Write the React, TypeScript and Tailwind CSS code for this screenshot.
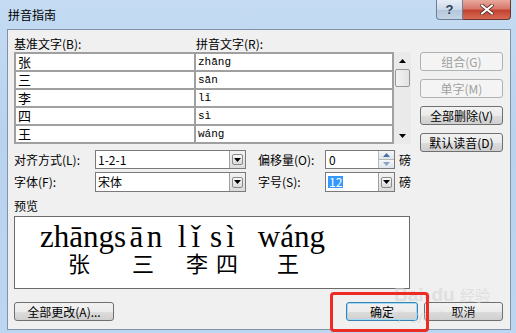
import React from "react";

const CJK = { fontFamily: '"Noto Sans CJK SC", "Liberation Sans", sans-serif' };

function Btn({ children, w, disabled, def }: { children: React.ReactNode; w: string; disabled?: boolean; def?: boolean }) {
  const base = "flex items-center justify-center h-[19px] rounded-[3px] text-[12px] leading-none";
  if (disabled)
    return (
      <div className={`${base} ${w} border border-[#adb2b5] bg-[#f4f4f4] text-[#a0a0a0]`}>{children}</div>
    );
  return (
    <div
      className={`${base} ${w} border ${def ? "border-[#3c7fb1] shadow-[inset_0_0_0_1px_#9ddcf6]" : "border-[#707070]"} bg-[linear-gradient(#f2f2f2_0%,#ebebeb_50%,#dddddd_51%,#cfcfcf_100%)] text-black`}
    >
      {children}
    </div>
  );
}

function DropBtn() {
  return (
    <div className="w-[16px] h-full border-l border-[#a0a0a0] bg-[linear-gradient(#f2f2f2,#dcdcdc)] flex items-center justify-center">
      <div className="w-[11px] h-[11px] border border-[#8a8a8a] rounded-[2px] bg-[linear-gradient(#fafafa,#d9d9d9)] flex items-center justify-center">
        <svg width="7" height="4" viewBox="0 0 7 4"><path d="M0 0h7L3.5 4z" fill="#000" /></svg>
      </div>
    </div>
  );
}

function Combo({ value, w, sel }: { value: string; w: string; sel?: boolean }) {
  return (
    <div className={`${w} h-full border border-[#7a7a7a] bg-white flex items-center`}>
      <div className="flex-1 pl-[2px] text-[12px] leading-none flex items-center">
        {sel ? <span className="bg-[#3399ff] text-white px-[1px]">{value}</span> : <span>{value}</span>}
      </div>
      <DropBtn />
    </div>
  );
}

function Spin({ value, w }: { value: string; w: string }) {
  return (
    <div className={`${w} h-full border border-[#7a7a7a] bg-white flex items-center`}>
      <div className="flex-1 pl-[3px] text-[12px] leading-none">{value}</div>
      <div className="w-[16px] h-full flex flex-col border-l border-[#b8b8b8]">
        <div className="flex-1 bg-[linear-gradient(#f6f6f6,#dfe6ee)] border-b border-[#b8b8b8] flex items-center justify-center">
          <svg width="7" height="4" viewBox="0 0 7 4"><path d="M0 4h7L3.5 0z" fill="#4a6fa5" /></svg>
        </div>
        <div className="flex-1 bg-[linear-gradient(#f6f6f6,#dfe6ee)] flex items-center justify-center">
          <svg width="7" height="4" viewBox="0 0 7 4"><path d="M0 0h7L3.5 4z" fill="#8aa0c0" /></svg>
        </div>
      </div>
    </div>
  );
}

const rows: [string, string][] = [
  ["张", "zhāng"],
  ["三", "sān"],
  ["李", "lǐ"],
  ["四", "sì"],
  ["王", "wáng"],
];

export default function App() {
  return (
    <div
      className="relative w-[516px] h-[333px] overflow-hidden bg-[linear-gradient(180deg,#c4dbf3_0%,#b9d2ee_40%,#bcd5f0_100%)]"
      style={CJK}
    >
      {/* title bar */}
      <div className="h-[29px] flex items-start">
        <div className="pl-[8px] pt-[7px] text-[12px] leading-[16px] text-black">拼音指南</div>
        <div className="flex-1" />
        <div className="flex mr-[5px]">
          <div className="w-[27px] h-[20px] border border-[#6d7f98] border-t-0 rounded-bl-[4px] bg-[linear-gradient(#e6edf6_0%,#cbd8e7_50%,#b4c6db_51%,#c5d5e7_100%)] flex items-center justify-center">
            <span className="text-[13px] font-bold leading-none text-[#2c3e57]" style={{ fontFamily: '"Liberation Sans", sans-serif' }}>?</span>
          </div>
          <div className="w-[48px] h-[20px] border border-[#6d3530] border-t-0 border-l-0 rounded-br-[4px] bg-[linear-gradient(#e9a99d_0%,#d7786b_45%,#c2432f_55%,#d86a55_100%)] flex items-center justify-center">
            <svg width="14" height="11" viewBox="0 0 14 11">
              <path d="M2 1.5l10 8M12 1.5l-10 8" stroke="#5a2a24" strokeWidth="3.6" strokeLinecap="round" />
              <path d="M2 1.5l10 8M12 1.5l-10 8" stroke="#fff" strokeWidth="2.2" strokeLinecap="round" />
            </svg>
          </div>
        </div>
      </div>

      {/* content */}
      <div className="ml-[7px] mr-[5px] h-[301px] border border-[#8193a8] bg-[#f0f0f0] pl-[6px] pt-[6px] text-[12px] text-black">
        <div className="flex">
          {/* left part */}
          <div className="w-[397px] flex flex-col">
            <div className="flex h-[16px] items-center leading-none">
              <div className="w-[182px]">基准文字(B):</div>
              <div>拼音文字(R):</div>
            </div>
            <div className="flex h-[92px]">
              <div className="w-[380px] h-full bg-[#a0a0a0] p-[2px] grid grid-cols-[178px_196px] auto-rows-[16px] gap-[2px]">
                {rows.map(([c, p]) => (
                  <React.Fragment key={c}>
                    <div className="bg-white pl-[2px] text-[13px] leading-[16px]">{c}</div>
                    <div className="bg-white pl-[2px] text-[11px] leading-[16px]" style={{ fontFamily: '"Liberation Mono", monospace' }}>{p}</div>
                  </React.Fragment>
                ))}
              </div>
              <div className="w-[17px] h-full bg-[#eaeaea] flex flex-col">
                <div className="h-[17px] flex items-center justify-center">
                  <svg width="7" height="4" viewBox="0 0 7 4"><path d="M0 4h7L3.5 0z" fill="#000" /></svg>
                </div>
                <div className="mx-[1px] h-[18px] border border-[#979797] rounded-[2px] bg-[linear-gradient(90deg,#f3f3f3,#e2e2e2)]" />
                <div className="flex-1" />
                <div className="h-[17px] flex items-center justify-center">
                  <svg width="7" height="4" viewBox="0 0 7 4"><path d="M0 0h7L3.5 4z" fill="#000" /></svg>
                </div>
              </div>
            </div>

            <div className="flex items-center h-[19px] mt-[6px]">
              <div className="w-[81px] leading-none">对齐方式(L):</div>
              <Combo value="1-2-1" w="w-[151px]" />
              <div className="w-[67px] ml-[12px] leading-none">偏移量(O):</div>
              <Spin value="0" w="w-[70px]" />
              <div className="ml-[4px] leading-none">磅</div>
            </div>
            <div className="flex items-center h-[20px] mt-[3px]">
              <div className="w-[81px] leading-none">字体(F):</div>
              <Combo value="宋体" w="w-[151px]" />
              <div className="w-[67px] ml-[12px] leading-none">字号(S):</div>
              <Combo value="12" w="w-[70px]" sel />
              <div className="ml-[4px] leading-none">磅</div>
            </div>
            <div className="h-[16px] mt-[6px] leading-[16px]">预览</div>
            <div className="mt-[2px] w-[396px] h-[73px] border border-[#6b6b6b] bg-white pt-[5px] overflow-hidden">
              <div className="flex h-[30px] leading-[30px] text-[31px] text-black whitespace-nowrap" style={{ fontFamily: '"Liberation Serif", serif' }}>
                <span className="ml-[25px]">zhāng</span>
                <span className="tracking-[3.5px]">sān</span>
                <span className="ml-[12px] tracking-[5px]">lǐ</span>
                <span className="ml-[5px] tracking-[4px]">sì</span>
                <span className="ml-[19px]">wáng</span>
              </div>
              <div className="flex h-[22px] leading-[22px] text-[22px] text-black -mt-[1px]">
                <span className="ml-[53px]">张</span>
                <span className="ml-[42px]">三</span>
                <span className="ml-[32px]">李</span>
                <span className="ml-[8px]">四</span>
                <span className="ml-[39px]">王</span>
              </div>
            </div>
          </div>

          {/* right buttons */}
          <div className="ml-[9px] mt-[16px] flex flex-col gap-[8px]">
            <Btn w="w-[83px]" disabled>组合(G)</Btn>
            <Btn w="w-[83px]" disabled>单字(M)</Btn>
            <Btn w="w-[83px]">全部删除(V)</Btn>
            <Btn w="w-[83px]">默认读音(D)</Btn>
          </div>
        </div>

        {/* bottom buttons */}
        <div className="flex mt-[13px]">
          <Btn w="w-[100px]">全部更改(A)...</Btn>
          <div className="ml-[232px]">
            <Btn w="w-[72px]" def>确定</Btn>
          </div>
          <div className="ml-[6px]">
            <Btn w="w-[79px]">取消</Btn>
          </div>
        </div>
      </div>

      {/* watermark */}
      <div className="absolute left-[394px] top-[284px] pointer-events-none text-[#d4d4d4] opacity-60 flex flex-col items-start">
        <div className="text-[19px] leading-[21px] font-bold" style={{ fontFamily: '"Liberation Sans", sans-serif' }}>
          Bai<span className="text-[13px]">●</span>du <span className="text-[15px] font-normal" style={CJK}>经验</span>
        </div>
        <div className="text-[12px] leading-[14px] ml-[4px] mt-[2px]" style={{ fontFamily: '"Liberation Sans", sans-serif' }}>jingyan.baidu.com</div>
      </div>

      {/* red annotation */}
      <div className="absolute left-[330px] top-[292px] w-[99px] h-[40px] border-[3px] border-[#ee2a24] rounded-[4px] pointer-events-none" />
    </div>
  );
}
